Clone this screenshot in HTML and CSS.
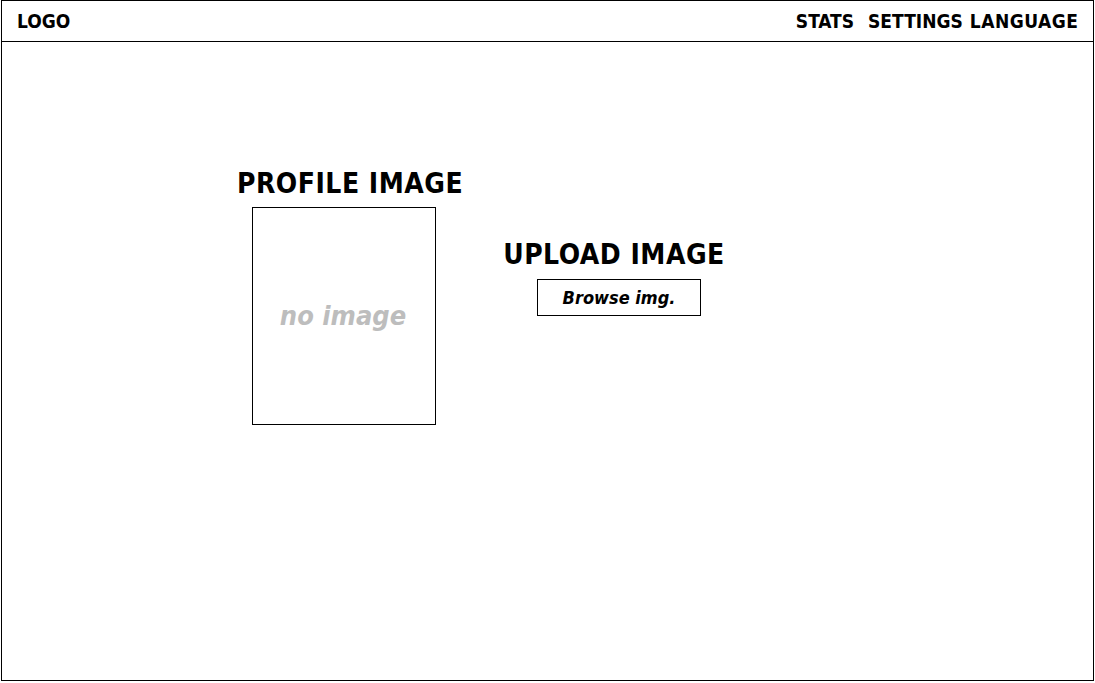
FILE: index.html
```html
<!DOCTYPE html>
<html>
<head>
<meta charset="utf-8">
<link rel="stylesheet" href="styles.css">
</head>
<body>
<div class="frame">
  <header class="topbar">
    <div class="logo">LOGO</div>
    <nav class="nav">
      <span class="nav-item stats">STATS</span>
      <span class="nav-item settings">SETTINGS</span>
      <span class="nav-item language">LANGUAGE</span>
    </nav>
  </header>
  <main class="content">
    <section class="profile">
      <h2 class="heading">PROFILE IMAGE</h2>
      <div class="photo"><span class="noimg">no image</span></div>
    </section>
    <section class="upload">
      <h2 class="heading">UPLOAD IMAGE</h2>
      <button class="browse">Browse img.</button>
    </section>
  </main>
</div>
</body>
</html>
```
FILE: styles.css
```css
html, body {
  margin: 0;
  padding: 0;
  background: #fff;
}
body {
  font-family: "DejaVu Sans Condensed", "DejaVu Sans", sans-serif;
  color: #000;
}
.frame {
  margin-left: 1px;
  width: 1093px;
  height: 681px;
  box-sizing: border-box;
  border: 1px solid #000;
  display: flex;
  flex-direction: column;
}
.topbar {
  height: 41px;
  box-sizing: border-box;
  border-bottom: 1px solid #000;
  display: flex;
  align-items: center;
  justify-content: space-between;
  padding: 0 15px 0 15px;
  font-weight: bold;
  font-size: 19px;
}
.nav {
  display: flex;
  gap: 7px;
}
.nav .stats { margin-right: 7px; }
.nav .language {
  letter-spacing: 0.5px;
  margin-right: -0.5px;
}
.content {
  display: flex;
  align-items: flex-start;
  padding: 125px 0 0 235px;
}
.heading {
  margin: 0;
  font-size: 28px;
  font-weight: bold;
  line-height: 34px;
  letter-spacing: 0.5px;
  white-space: nowrap;
}
.profile {
  display: flex;
  flex-direction: column;
  align-items: flex-start;
}
.photo {
  margin: 6px 0 0 15px;
  width: 184px;
  height: 218px;
  box-sizing: border-box;
  border: 1px solid #000;
  display: flex;
  align-items: center;
  justify-content: center;
}
.noimg {
  color: #bdbdbd;
  font-style: italic;
  font-weight: bold;
  font-size: 27px;
  margin: 0 0 2px -2px;
}
.upload {
  margin: 71px 0 0 40px;
  display: flex;
  flex-direction: column;
  align-items: center;
}
.browse {
  margin: 7px 0 0 10px;
  width: 164px;
  height: 37px;
  border: 1px solid #000;
  background: #fff;
  font-family: inherit;
  font-style: italic;
  font-weight: bold;
  font-size: 18px;
  color: #000;
  padding: 0;
}
```
